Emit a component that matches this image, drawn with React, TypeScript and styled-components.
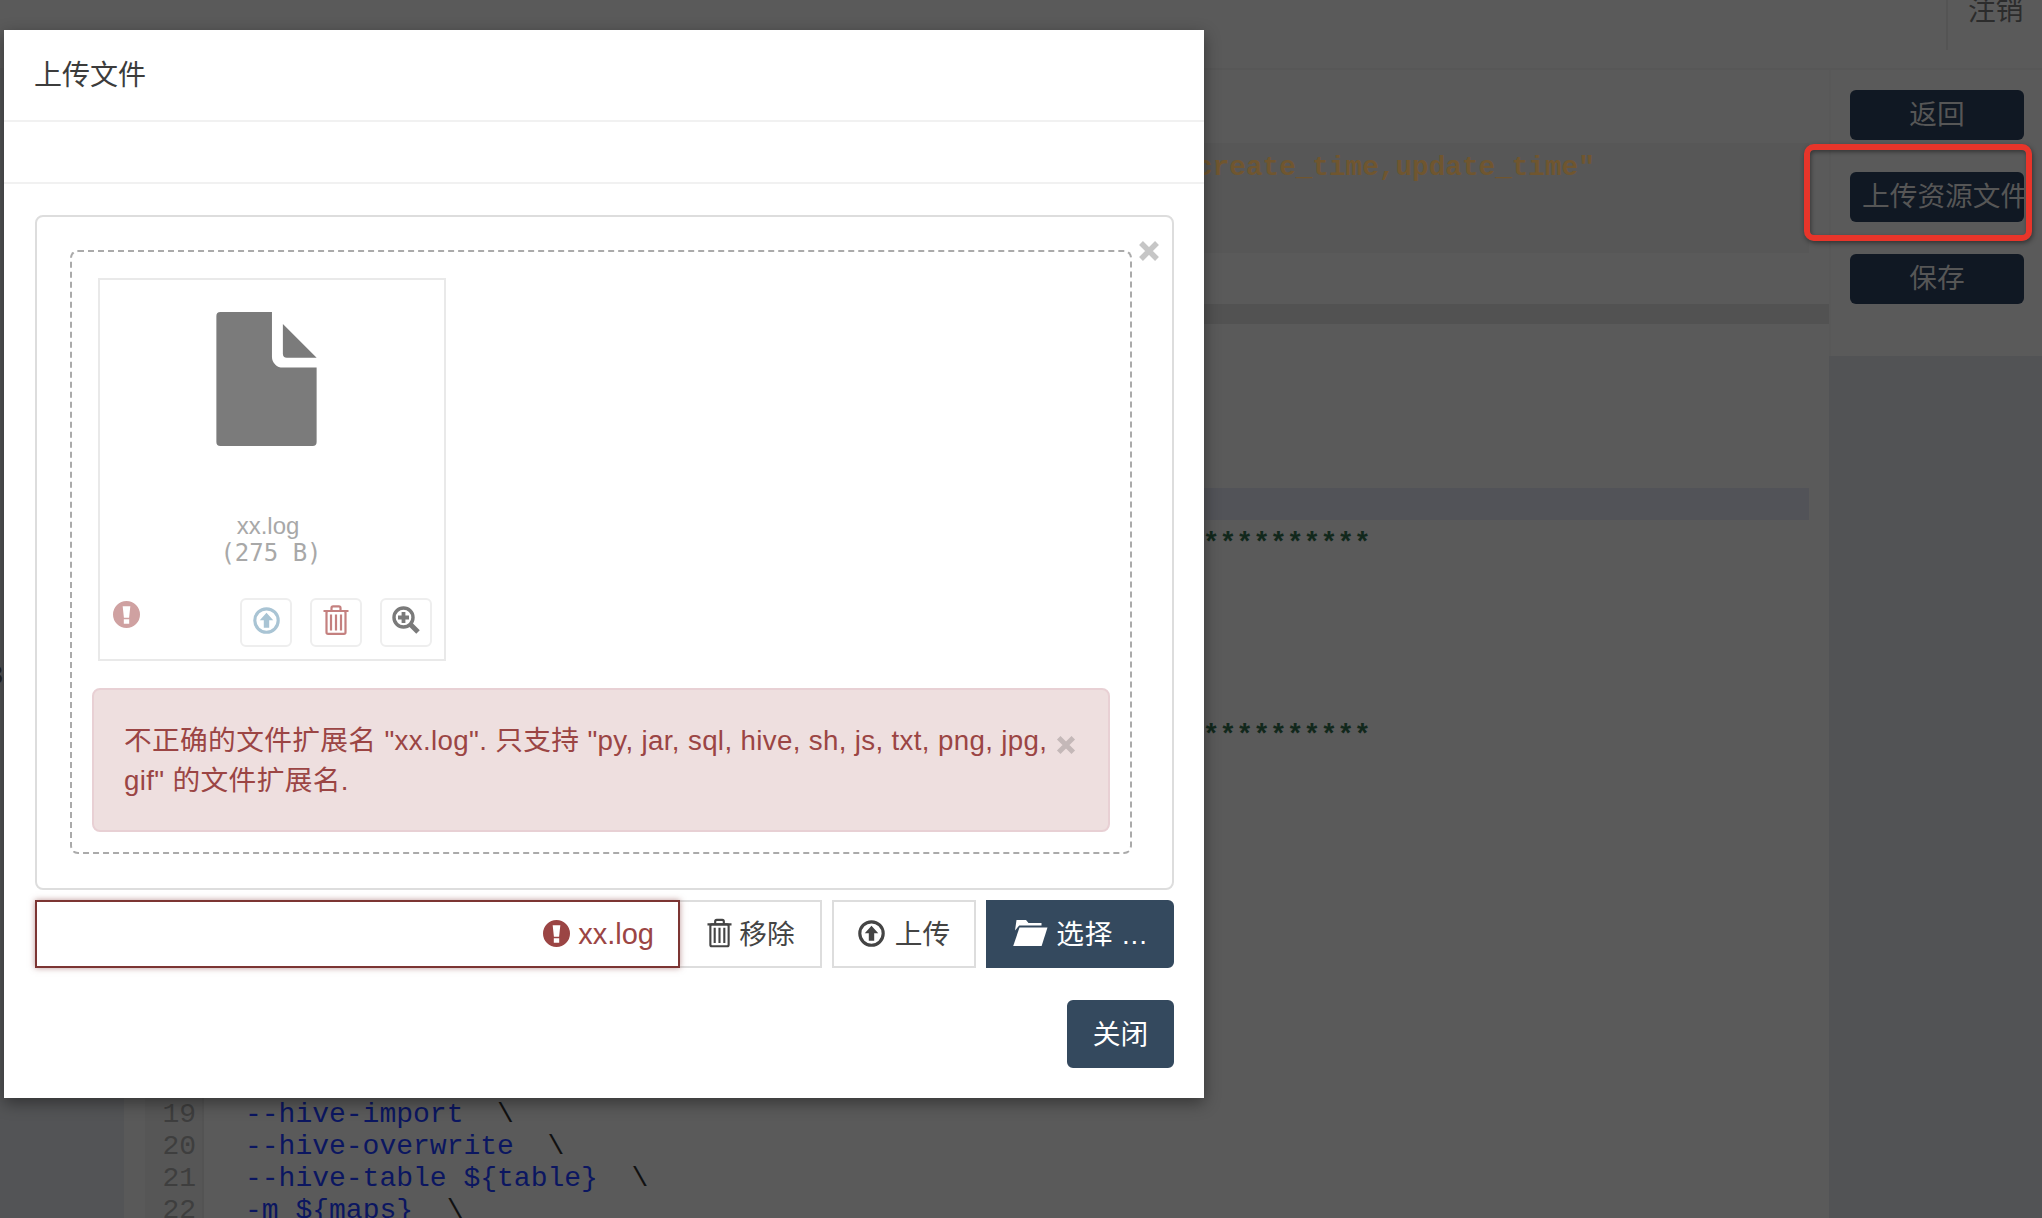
import React from "react";

import styled, {createGlobalStyle} from "styled-components";

const SANS = `"Liberation Sans", "Noto Sans CJK SC", sans-serif`;
const MONO = `"Liberation Mono", "Noto Sans CJK SC", monospace`;
const NAVY = "#34495e";

const GlobalStyle = createGlobalStyle`
	html, body {
		margin: 0;
		padding: 0;
		height: 100%;
		overflow: hidden;
		background: #5a5a5a;
	}
	* {
		box-sizing: border-box;
	}
`;

const Page = styled.div`
	display: flex;
	flex-direction: column;
	position: relative;
	height: 1218px;
	overflow: hidden;
	font-family: ${SANS};
	font-size: 27.7px;
	background: #5a5a5a;
`;

const TopBar = styled.header`
	display: flex;
	flex: 0 0 70px;
	justify-content: flex-end;
	align-items: flex-start;
	border-bottom: 2px solid #575757;
`;

const LogoutCell = styled.div`
	height: 50px;
	width: 96px;
	padding-left: 20px;
	border-left: 2px solid #545454;
	color: #2c2c2c;
	line-height: 40px;
	overflow: hidden;
	span {
		display: block;
		margin-top: -9px;
	}
`;

const Body = styled.div`
	display: flex;
	flex: 1 1 auto;
	min-height: 0;
`;

const Sidebar = styled.aside`
	flex: 0 0 124px;
	padding-top: 591px;
	background: #535456;
	color: #222;
	font-family: ${MONO};
	line-height: 32px;
	overflow: hidden;
	span {
		display: block;
		margin-left: -13px;
	}
`;

const Editor = styled.main`
	flex: 1 1 auto;
	min-width: 0;
	padding-top: 73px;
	overflow: hidden;
	font-family: ${MONO};
	font-size: 28px;
	line-height: 32px;
`;

const ParamBlock = styled.div`
	height: 110px;
	margin-right: 20px;
	padding: 9px 0 0 125px;
	background: #575757;
	color: #70562f;
	font-size: 27.7px;
	font-weight: 700;
	white-space: pre;
	overflow: hidden;
`;

const Divider = styled.div`
	height: 20px;
	margin-top: 51px;
	background: #525252;
`;

const ActiveLine = styled.div`
	height: 32px;
	margin: 164px 20px 3px 0;
	background: #525358;
`;

const CodeRow = styled.div`
	display: flex;
	height: 32px;
`;

const LineNumber = styled.div`
	flex: 0 0 80px;
	padding-right: 6px;
	border-left: 21px solid #595959;
	border-right: 2px solid #535353;
	background: #565656;
	color: #3e3e3e;
	text-align: right;
`;

const CodeText = styled.div`
	padding-left: 41px;
	color: #0b1660;
	white-space: pre;
	i {
		font-style: normal;
		color: #111;
	}
`;

const StarText = styled(CodeText)`
	padding-top: 5px;
	color: #12281c;
	font-weight: 700;
`;

const ActionPanel = styled.aside`
	display: flex;
	flex: 0 0 213px;
	flex-direction: column;
	min-width: 0;
	background: #525355;
`;

const ActionList = styled.div`
	display: flex;
	flex: 0 0 286px;
	flex-direction: column;
	gap: 32px;
	padding: 20px 18px 0 19px;
	background: #5a5a5a;
	border-left: 2px solid #585858;
`;

const ActionButton = styled.div`
	height: 50px;
	padding: 0 12px;
	border-radius: 6px;
	background: #101823;
	color: #565656;
	line-height: 50px;
	text-align: center;
	white-space: nowrap;
	overflow: hidden;
`;

const Annotation = styled.div`
	position: absolute;
	left: 1804px;
	top: 144px;
	width: 228px;
	height: 97px;
	border: 6px solid #e8352a;
	border-radius: 10px;
	box-shadow: 1px 2px 5px rgba(0, 0, 0, 0.45), inset 1px 2px 4px rgba(0, 0, 0, 0.4);
`;

const Modal = styled.section`
	position: absolute;
	left: 4px;
	top: 30px;
	display: flex;
	flex-direction: column;
	width: 1200px;
	height: 1068px;
	background: #fff;
	box-shadow: 0 5px 15px rgba(0, 0, 0, 0.4);
	color: #333;
	line-height: 39.6px;
`;

const ModalHeader = styled.div`
	flex: 0 0 92px;
	padding: 26px 30px 0;
	border-bottom: 2px solid #f1f1f1;
	color: #3c3c3c;
	font-size: 28px;
`;

const ModalStrip = styled.div`
	flex: 0 0 62px;
	border-bottom: 2px solid #f1f1f1;
`;

const ModalBody = styled.div`
	display: flex;
	flex-direction: column;
	padding: 31px 30px 30px 31px;
`;

const Preview = styled.div`
	position: relative;
	height: 675px;
	padding: 33px 40px 34px 33px;
	border: 2px solid #ddd;
	border-radius: 8px;
`;

const CloseMark = styled.svg<{$left: number; $top: number; $size: number}>`
	position: absolute;
	left: ${props => props.$left}px;
	top: ${props => props.$top}px;
	width: ${props => props.$size}px;
	height: ${props => props.$size}px;
`;

const DropZone = styled.div`
	display: flex;
	flex-direction: column;
	height: 604px;
	padding: 26px 20px 20px;
	border: 2px dashed #aaa;
	border-radius: 8px;
`;

const Thumb = styled.div`
	display: flex;
	flex: 0 0 383px;
	flex-direction: column;
	width: 348px;
	margin-left: 6px;
	padding: 32px 12px 12px;
	border: 2px solid #e9e9e9;
`;

const FileGlyph = styled.svg`
	flex: 0 0 134px;
	width: 101px;
	margin-left: 104px;
`;

const ThumbName = styled.div`
	margin-top: 66px;
	padding-right: 8px;
	color: #a8a8a8;
	font-size: 24px;
	line-height: 27px;
	text-align: center;
`;

const ThumbSize = styled.div`
	margin-top: 1px;
	padding-left: 4px;
	padding-right: 6px;
	color: #a8a8a8;
	font-family: "DejaVu Sans Mono", monospace;
	font-size: 24px;
	line-height: 26px;
	text-align: center;
	white-space: pre;
`;

const ThumbFooter = styled.div`
	display: flex;
	justify-content: space-between;
	margin-top: auto;
`;

const ThumbStatus = styled.svg`
	width: 27px;
	height: 27px;
	margin: 3px 0 0 1px;
	color: #cfa1a1;
`;

const ThumbActions = styled.div`
	display: flex;
	gap: 18px;
`;

const ThumbAction = styled.div<{$tone: string}>`
	display: flex;
	align-items: center;
	justify-content: center;
	width: 52px;
	height: 49px;
	padding-bottom: 5px;
	border: 2px solid #eee;
	border-radius: 6px;
	color: ${props => props.$tone};
`;

const Alert = styled.div`
	position: relative;
	flex: 0 0 144px;
	margin-top: 27px;
	padding: 31px 55px 30px 30px;
	border: 2px solid #e8d0d4;
	border-radius: 8px;
	background: #eedfdf;
	color: #9b4544;
	letter-spacing: 0.35px;
`;

const InputRow = styled.div`
	display: flex;
	margin-top: 10px;
`;

const Caption = styled.div`
	position: relative;
	z-index: 1;
	display: flex;
	flex: 0 0 645px;
	align-items: center;
	justify-content: flex-end;
	gap: 8px;
	height: 68px;
	padding: 2px 24px 0 0;
	border: 2px solid #7c3533;
	box-shadow: 0 0 6px rgba(124, 53, 51, 0.5);
	background: #fff;
	color: #9b4544;
	font-size: 29px;
	svg {
		margin-bottom: 4px;
	}
`;

const Button = styled.div<{$primary?: boolean}>`
	display: flex;
	align-items: center;
	justify-content: center;
	height: 68px;
	padding-top: 2px;
	border: 2px solid ${props => props.$primary ? NAVY : "#ddd"};
	background: ${props => props.$primary ? NAVY : "#fff"};
	color: ${props => props.$primary ? "#fff" : "#444"};
	svg {
		margin-bottom: 4px;
	}
`;

const RemoveButton = styled(Button)`
	flex: 0 0 144px;
	gap: 7px;
	margin-left: -2px;
	margin-right: 10px;
	padding-left: 2px;
`;

const UploadButton = styled(Button)`
	flex: 0 0 144px;
	gap: 10px;
	margin-right: 10px;
`;

const SelectButton = styled(Button)`
	flex: 0 0 188px;
	gap: 8px;
	border-radius: 0 6px 6px 0;
	letter-spacing: 0.9px;
`;

const CloseButton = styled(Button)`
	flex: 0 0 68px;
	align-self: flex-end;
	width: 107px;
	margin-top: 32px;
	border-radius: 6px;
`;

const ExclamationPaths = () => (
	<path
		fillRule="evenodd"
		fill="currentColor"
		d="M12 0a12 12 0 1 0 0 24a12 12 0 0 0 0-24ZM8.6 4.6h6.8l-1.1 10.2h-4.6ZM9.6 16.2h4.8v4h-4.8Z"
	/>
);

const CircleUp: React.FC<{size: number}> = ({size}) => (
	<svg width={size} height={size} viewBox="0 0 24 24">
		<circle cx="12" cy="12" r="10.4" fill="none" stroke="currentColor" strokeWidth="2.8"/>
		<path fill="currentColor" d="M12 5.2l6 6.6h-3.6v6.6H9.6v-6.6H6Z"/>
	</svg>
);

const Trash: React.FC<{width: number; height: number}> = ({width, height}) => (
	<svg width={width} height={height} viewBox="0 0 26 30" fill="none" stroke="currentColor" strokeWidth="2.2">
		<path d="M0.5 6H25.5M8.5 5.5V3a1.6 1.6 0 0 1 1.6-1.6h5.8A1.6 1.6 0 0 1 17.5 3v2.5"/>
		<rect x="3.5" y="6" width="19" height="22.8" rx="1.6"/>
		<path d="M8 9.5V25.5M13 9.5V25.5M18 9.5V25.5"/>
	</svg>
);

const Magnifier = () => (
	<svg width="28" height="28" viewBox="0 0 28 28">
		<circle cx="11.5" cy="11.5" r="9.5" fill="none" stroke="currentColor" strokeWidth="3.4"/>
		<path stroke="currentColor" strokeWidth="5" d="M17.5 17.5L26 26"/>
		<path fill="currentColor" d="M9.6 6h3.8v3.6H17v3.8h-3.6V17H9.6v-3.6H6V9.6h3.6Z"/>
	</svg>
);

const FolderOpen = () => (
	<svg width="36" height="28" viewBox="0 0 36 28">
		<path fill="currentColor" d="M4.5 1h9.5l2.5 3h13v2.6H7.2L3 11.5Z"/>
		<path fill="currentColor" d="M7.5 8.6H35.5L29.6 27H1.2Z"/>
	</svg>
);

const CrossLines = ({tone}: {tone: string}) => (
	<path stroke={tone} strokeWidth="5.5" fill="none" d="M3 3L19 19M19 3L3 19"/>
);

const COLUMNS = `--columns "id,job_id,task_id,name,status,own,params,type,create_time,update_time"`;
const STARS = "*".repeat(67);

// line number => content of the rows still visible around the dialog
const CODE: Record<number, React.ReactNode> = {
	19: <>--hive-import  <i>\</i></>,
	20: <>--hive-overwrite  <i>\</i></>,
	21: <>--hive-table ${"{table}"}  <i>\</i></>,
	22: <>-m ${"{maps}"}  <i>\</i></>
};

const LINES = Array.from({length: 22}, (_, index) => index + 1);

const App: React.FC = () => {
	return (
		<Page>
			<GlobalStyle/>
			<TopBar>
				<LogoutCell><span>注销</span></LogoutCell>
			</TopBar>
			<Body>
				<Sidebar><span>3</span></Sidebar>
				<Editor>
					<ParamBlock>{COLUMNS}</ParamBlock>
					<Divider/>
					<ActiveLine/>
					{LINES.map(line => (
						<CodeRow key={line}>
							<LineNumber>{line}</LineNumber>
							{line === 1 || line === 7
								? <StarText>{STARS}</StarText>
								: <CodeText>{CODE[line]}</CodeText>}
						</CodeRow>
					))}
				</Editor>
				<ActionPanel>
					<ActionList>
						<ActionButton>返回</ActionButton>
						<ActionButton>上传资源文件</ActionButton>
						<ActionButton>保存</ActionButton>
					</ActionList>
				</ActionPanel>
			</Body>
			<Annotation/>
			<Modal>
				<ModalHeader>上传文件</ModalHeader>
				<ModalStrip/>
				<ModalBody>
					<Preview>
						<CloseMark $left={1101} $top={23} $size={22} viewBox="0 0 22 22">
							<CrossLines tone="#c6c6c6"/>
						</CloseMark>
						<DropZone>
							<Thumb>
								<FileGlyph viewBox="0 0 101 135">
									<path fill="#7b7b7b" d="M4 0H56V45a11 11 0 0 0 11 11H101V131a4 4 0 0 1-4 4H4a4 4 0 0 1-4-4V4a4 4 0 0 1 4-4Z"/>
									<path fill="#7b7b7b" d="M67 12L101 46H71a4 4 0 0 1-4-4Z"/>
								</FileGlyph>
								<ThumbName>xx.log</ThumbName>
								<ThumbSize>(275 B)</ThumbSize>
								<ThumbFooter>
									<ThumbStatus viewBox="0 0 24 24"><ExclamationPaths/></ThumbStatus>
									<ThumbActions>
										<ThumbAction $tone="#a9c4d4"><CircleUp size={27}/></ThumbAction>
										<ThumbAction $tone="#c4807f"><Trash width={26} height={30}/></ThumbAction>
										<ThumbAction $tone="#7a7a7a"><Magnifier/></ThumbAction>
									</ThumbActions>
								</ThumbFooter>
							</Thumb>
							<Alert>
								不正确的文件扩展名 "xx.log". 只支持 "py, jar, sql, hive, sh, js, txt, png, jpg, gif" 的文件扩展名.
								<CloseMark $left={962} $top={45} $size={20} viewBox="0 0 22 22">
									<CrossLines tone="#c4b8b8"/>
								</CloseMark>
							</Alert>
						</DropZone>
					</Preview>
					<InputRow>
						<Caption>
							<svg width="27" height="27" viewBox="0 0 24 24"><ExclamationPaths/></svg>
							xx.log
						</Caption>
						<RemoveButton><Trash width={25} height={30}/>移除</RemoveButton>
						<UploadButton><CircleUp size={27}/>上传</UploadButton>
						<SelectButton $primary><FolderOpen/>选择 ...</SelectButton>
					</InputRow>
					<CloseButton $primary>关闭</CloseButton>
				</ModalBody>
			</Modal>
		</Page>
	);
};

export default App;
